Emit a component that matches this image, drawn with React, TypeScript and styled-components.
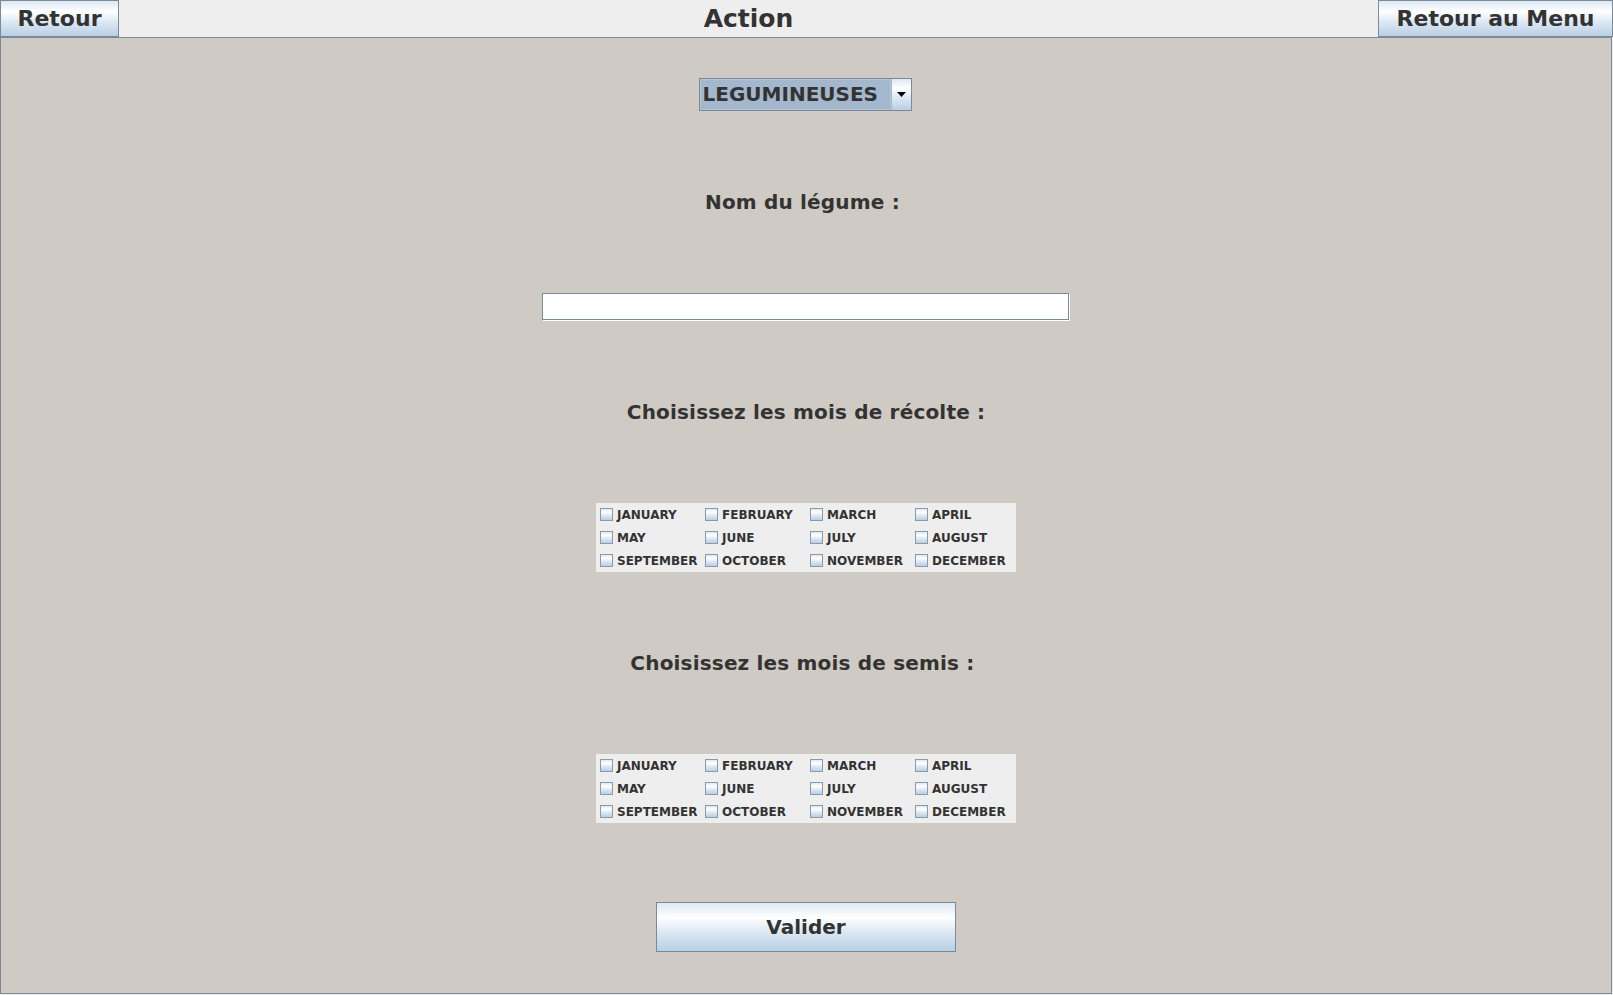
import React from "react";
import styled, { createGlobalStyle } from "styled-components";

const GlobalStyle = createGlobalStyle`
  html, body {
    margin: 0;
    padding: 0;
    background: #eeeeee;
  }
  body {
    font-family: "DejaVu Sans", "Liberation Sans", sans-serif;
    color: #333333;
  }
`;

const oceanGradient = `linear-gradient(to bottom, #dde8f3 0%, #ffffff 30%, #dde8f3 60%, #b8cfe5 100%)`;

const Window = styled.div`
  width: 1613px;
  height: 995px;
  display: flex;
  flex-direction: column;
  background: #eeeeee;
`;

const Header = styled.header`
  display: flex;
  align-items: stretch;
  height: 37px;
  background: #eeeeee;
`;

const NavButton = styled.button<{ $width: number }>`
  box-sizing: border-box;
  width: ${(p) => p.$width}px;
  height: 37px;
  margin: 0;
  padding: 0;
  border: 1px solid #7a8a99;
  background: ${oceanGradient};
  font-family: "DejaVu Sans", sans-serif;
  font-weight: bold;
  font-size: 22px;
  line-height: 35px;
  color: #333333;
  text-align: center;
  cursor: pointer;
`;

const Title = styled.h1`
  flex: 1;
  margin: 0;
  font-size: 25px;
  font-weight: bold;
  line-height: 37px;
  text-align: center;
  color: #333333;
`;

const Panel = styled.main`
  box-sizing: border-box;
  width: 1612px;
  height: 957px;
  border: 1px solid #7a8a99;
  background: #cfcac4;
  display: flex;
  flex-direction: column;
  align-items: center;
`;

const Combo = styled.div<{ $top: number }>`
  box-sizing: border-box;
  margin-top: ${(p) => p.$top}px;
  margin-left: -2px;
  width: 213px;
  height: 33px;
  border: 1px solid #7a8a99;
  display: flex;
  background: #eeeeee;
`;

const ComboValue = styled.div`
  box-sizing: border-box;
  flex: 1;
  background: #a3b8cc;
  border: 1px solid #b3c4d6;
  padding-left: 2px;
  font-size: 20px;
  font-weight: bold;
  line-height: 29px;
  color: #333333;
`;

const ComboArrow = styled.div`
  box-sizing: border-box;
  width: 20px;
  border-left: 1px solid #a9b6c3;
  background: ${oceanGradient};
  display: flex;
  align-items: center;
  justify-content: center;
`;

const Label = styled.div<{ $top: number }>`
  margin-top: ${(p) => p.$top}px;
  font-size: 20px;
  font-weight: bold;
  line-height: 24px;
  height: 24px;
  letter-spacing: 0.18px;
  color: #333333;
  white-space: pre;
`;

const TextField = styled.input<{ $top: number }>`
  box-sizing: border-box;
  margin-top: ${(p) => p.$top}px;
  margin-left: -1px;
  margin-bottom: 1px;
  width: 527px;
  height: 27px;
  border: 1px solid #7a8a99;
  box-shadow: 1px 1px 0 #ffffff;
  background: #ffffff;
  outline: none;
  padding: 0 4px;
  font-family: "DejaVu Sans", sans-serif;
  font-size: 14px;
`;

const MonthGrid = styled.div<{ $top: number }>`
  margin-top: ${(p) => p.$top}px;
  display: grid;
  grid-template-columns: repeat(4, 105px);
  grid-auto-rows: 23px;
  background: #eeeeee;
`;

const MonthCell = styled.label`
  display: flex;
  align-items: center;
  gap: 4px;
  padding-left: 4px;
  font-size: 12px;
  font-weight: bold;
  color: #333333;
  white-space: nowrap;
  cursor: pointer;
`;

const Box = styled.span`
  box-sizing: border-box;
  flex: none;
  width: 13px;
  height: 13px;
  border: 1px solid #8a9aab;
  background: ${oceanGradient};
`;

const SubmitButton = styled.button<{ $top: number }>`
  box-sizing: border-box;
  margin-top: ${(p) => p.$top}px;
  width: 300px;
  height: 50px;
  border: 1px solid #7a8a99;
  background: ${oceanGradient};
  font-family: "DejaVu Sans", sans-serif;
  font-size: 20px;
  font-weight: bold;
  color: #333333;
  padding: 0;
  cursor: pointer;
`;

const MONTHS = [
  "JANUARY",
  "FEBRUARY",
  "MARCH",
  "APRIL",
  "MAY",
  "JUNE",
  "JULY",
  "AUGUST",
  "SEPTEMBER",
  "OCTOBER",
  "NOVEMBER",
  "DECEMBER",
];

function Months({ top }: { top: number }) {
  return (
    <MonthGrid $top={top}>
      {MONTHS.map((m) => (
        <MonthCell key={m}>
          <Box />
          {m}
        </MonthCell>
      ))}
    </MonthGrid>
  );
}

export default function App() {
  return (
    <>
      <GlobalStyle />
      <Window>
        <Header>
          <NavButton $width={119}>Retour</NavButton>
          <Title>Action</Title>
          <NavButton $width={235}>Retour au Menu</NavButton>
        </Header>
        <Panel>
          <Combo $top={40}>
            <ComboValue>LEGUMINEUSES</ComboValue>
            <ComboArrow>
              <svg width="9" height="5" viewBox="0 0 9 5">
                <path d="M0 0 H9 L4.5 5 Z" fill="#000" />
              </svg>
            </ComboArrow>
          </Combo>
          <Label $top={79}>{"Nom du légume : "}</Label>
          <TextField $top={79} />
          <Label $top={79}>Choisissez les mois de récolte :</Label>
          <Months top={79} />
          <Label $top={79}>{"Choisissez les mois de semis : "}</Label>
          <Months top={79} />
          <SubmitButton $top={79}>Valider</SubmitButton>
        </Panel>
      </Window>
    </>
  );
}
